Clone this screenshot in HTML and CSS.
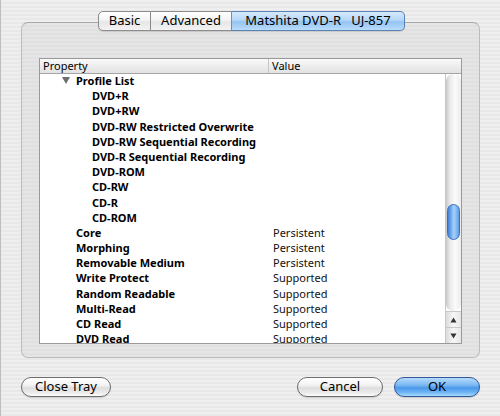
FILE: index.html
```html
<!DOCTYPE html>
<html>
<head>
<meta charset="utf-8">
<link rel="stylesheet" href="styles.css">
</head>
<body>
<div class="window">
  <div class="tabs">
    <div class="tab first">Basic</div>
    <div class="tab">Advanced</div>
    <div class="tab selected">Matshita DVD-R&nbsp;&nbsp;&nbsp;UJ-857</div>
  </div>
  <div class="group">
    <div class="table">
      <div class="thead">
        <div class="th col-prop">Property</div>
        <div class="th col-val">Value</div>
      </div>
      <div class="tbody">
        <div class="rows">
          <div class="row"><div class="cell col-prop lvl1"><span class="disclosure"></span>Profile List</div><div class="cell col-val"></div></div>
          <div class="row"><div class="cell col-prop lvl2">DVD+R</div><div class="cell col-val"></div></div>
          <div class="row"><div class="cell col-prop lvl2">DVD+RW</div><div class="cell col-val"></div></div>
          <div class="row"><div class="cell col-prop lvl2">DVD-RW Restricted Overwrite</div><div class="cell col-val"></div></div>
          <div class="row"><div class="cell col-prop lvl2">DVD-RW Sequential Recording</div><div class="cell col-val"></div></div>
          <div class="row"><div class="cell col-prop lvl2">DVD-R Sequential Recording</div><div class="cell col-val"></div></div>
          <div class="row"><div class="cell col-prop lvl2">DVD-ROM</div><div class="cell col-val"></div></div>
          <div class="row"><div class="cell col-prop lvl2">CD-RW</div><div class="cell col-val"></div></div>
          <div class="row"><div class="cell col-prop lvl2">CD-R</div><div class="cell col-val"></div></div>
          <div class="row"><div class="cell col-prop lvl2">CD-ROM</div><div class="cell col-val"></div></div>
          <div class="row"><div class="cell col-prop lvl1">Core</div><div class="cell col-val">Persistent</div></div>
          <div class="row"><div class="cell col-prop lvl1">Morphing</div><div class="cell col-val">Persistent</div></div>
          <div class="row"><div class="cell col-prop lvl1">Removable Medium</div><div class="cell col-val">Persistent</div></div>
          <div class="row"><div class="cell col-prop lvl1">Write Protect</div><div class="cell col-val">Supported</div></div>
          <div class="row"><div class="cell col-prop lvl1">Random Readable</div><div class="cell col-val">Supported</div></div>
          <div class="row"><div class="cell col-prop lvl1">Multi-Read</div><div class="cell col-val">Supported</div></div>
          <div class="row"><div class="cell col-prop lvl1">CD Read</div><div class="cell col-val">Supported</div></div>
          <div class="row"><div class="cell col-prop lvl1">DVD Read</div><div class="cell col-val">Supported</div></div>
        </div>
        <div class="scrollbar">
          <div class="track">
            <div class="track-cap"></div>
            <div class="thumb"></div>
          </div>
          <div class="arrow up"><svg width="7" height="6" viewBox="0 0 7 6"><path d="M3.5 0.5 L6.5 5.5 L0.5 5.5 Z" fill="#333"/></svg></div>
          <div class="arrow down"><svg width="7" height="6" viewBox="0 0 7 6"><path d="M0.5 0.5 L6.5 0.5 L3.5 5.5 Z" fill="#333"/></svg></div>
        </div>
      </div>
    </div>
  </div>
  <div class="buttons">
    <div class="btn close">Close Tray</div>
    <div class="spacer"></div>
    <div class="btn cancel">Cancel</div>
    <div class="btn ok">OK</div>
  </div>
</div>
</body>
</html>
```

FILE: styles.css
```css
html, body {
  margin: 0;
  padding: 0;
}
body {
  width: 500px;
  height: 416px;
  overflow: hidden;
  font-family: "Noto Sans", "DejaVu Sans", sans-serif;
  color: #000;
  background: repeating-linear-gradient(180deg, #efefef 0, #efefef 2px, #e8e8e8 2px, #e8e8e8 4px);
}
.window {
  display: flex;
  flex-direction: column;
  padding-top: 11px;
  height: 416px;
  box-sizing: border-box;
  border-left: 1px solid #bdbdbd;
}
.tabs {
  display: flex;
  justify-content: center;
  margin-bottom: -9px;
  position: relative;
  z-index: 1;
  padding-left: 2px;
}
.tab {
  height: 20px;
  box-sizing: border-box;
  border: 1px solid #8c8c8c;
  border-left: none;
  font-size: 13px;
  line-height: 17px;
  padding: 0 0 1px 0;
  text-align: center;
  background: linear-gradient(180deg, #ffffff 0%, #f4f4f4 45%, #e6e6e6 55%, #f3f3f3 100%);
  box-shadow: 0 1px 1px rgba(0,0,0,0.12);
}
.tab.first {
  border-left: 1px solid #8c8c8c;
  border-radius: 5px 0 0 5px;
  width: 53px;
}
.tab:nth-child(2) {
  width: 81px;
}
.tab.selected {
  border-radius: 0 5px 5px 0;
  border-color: #5a82b4;
  width: 173px;
  background: linear-gradient(180deg, #d6e9fc 0%, #b4d7f8 45%, #94c4f3 55%, #b9dcfb 100%);
}
.group {
  margin: 0 20px 0 20px;
  height: 336px;
  box-sizing: border-box;
  border: 1px solid #bcbcbc;
  border-top-color: #a8a8a8;
  border-radius: 7px;
  background: repeating-linear-gradient(180deg, #e5e5e5 0, #e5e5e5 2px, #e0e0e0 2px, #e0e0e0 4px);
  padding: 35px 17px 13px 17px;
}
.table {
  height: 286px;
  box-sizing: border-box;
  border: 1px solid #9a9a9a;
  background: #fff;
  display: flex;
  flex-direction: column;
}
.thead {
  display: flex;
  height: 15px;
  box-sizing: border-box;
  border-bottom: 1px solid #a5a5a5;
  background: linear-gradient(180deg, #fafafa 0%, #ededed 50%, #e2e2e2 100%);
  font-size: 11px;
  line-height: 13px;
}
.th {
  padding-left: 3px;
  box-sizing: border-box;
}
.th.col-prop {
  width: 229px;
  border-right: 1px solid #c4c4c4;
}
.th.col-val {
  flex: 1;
}
.tbody {
  flex: 1;
  display: flex;
  overflow: hidden;
}
.rows {
  flex: 1;
  overflow: hidden;
}
.row {
  display: flex;
  height: 15.2px;
  box-sizing: border-box;
  padding-bottom: 2px;
  font-size: 11px;
  line-height: 13.2px;
  white-space: nowrap;
}
.cell.col-prop {
  width: 229px;
  font-weight: bold;
  box-sizing: border-box;
}
.cell.col-val {
  flex: 1;
  padding-left: 4px;
  color: #111;
}
.lvl1 {
  padding-left: 36px;
  position: relative;
}
.lvl2 {
  padding-left: 52px;
}
.disclosure {
  position: absolute;
  left: 22px;
  top: 3px;
  width: 0;
  height: 0;
  border-left: 4px solid transparent;
  border-right: 4px solid transparent;
  border-top: 7px solid #6e6e6e;
}
.scrollbar {
  width: 15px;
  display: flex;
  flex-direction: column;
  border-left: 1px solid #c8c8c8;
  background: #fff;
}
.track {
  flex: 1;
  background: linear-gradient(90deg, #c9c9c9 0%, #e9e9e9 25%, #fbfbfb 60%, #ececec 100%);
  border-radius: 7px;
  display: flex;
  flex-direction: column;
}
.track-cap {
  height: 130px;
}
.thumb {
  height: 36px;
  margin: 0 1px;
  border-radius: 7px;
  border: 1px solid #3a6fb8;
  background: linear-gradient(90deg, #3e80d8 0%, #7db6f3 35%, #a8d1fa 55%, #5e9de8 100%);
  box-sizing: border-box;
}
.arrow {
  height: 16px;
  display: flex;
  align-items: center;
  justify-content: center;
  background: linear-gradient(90deg, #dcdcdc 0%, #f6f6f6 50%, #e6e6e6 100%);
  border-top: 1px solid #c8c8c8;
  box-sizing: border-box;
}
.buttons {
  display: flex;
  margin-top: 19px;
  padding: 0 20px 0 20px;
  align-items: center;
}
.spacer {
  flex: 1;
}
.btn {
  height: 20px;
  box-sizing: border-box;
  border: 1px solid #6e6e6e;
  border-radius: 10px;
  font-size: 13px;
  line-height: 17px;
  padding-bottom: 1px;
  text-align: center;
  background: linear-gradient(180deg, #ffffff 0%, #f3f3f3 40%, #dedede 55%, #eaeaea 80%, #fbfbfb 100%);
  box-shadow: 0 1px 1px rgba(0,0,0,0.15);
}
.btn.close {
  width: 90px;
}
.btn.cancel {
  width: 86px;
}
.btn.ok {
  width: 86px;
  margin-left: 11px;
  border-color: #31579a;
  background: linear-gradient(180deg, #b7dbfb 0%, #7ab8f3 40%, #4b98ea 55%, #6fb5f5 80%, #a9dcfc 100%);
}
```
